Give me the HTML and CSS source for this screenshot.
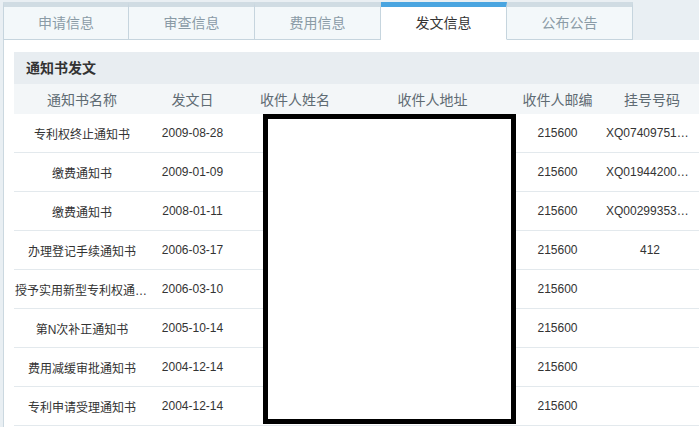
FILE: index.html
```html
<!DOCTYPE html>
<html lang="zh">
<head>
    <meta charset="UTF-8">
    <title>发文信息</title>
    <link rel="stylesheet" href="styles.css">
</head>
<body>
    <div class="page">
        <ul class="tabs">
            <li class="tab">申请信息</li>
            <li class="tab">审查信息</li>
            <li class="tab">费用信息</li>
            <li class="tab active">发文信息</li>
            <li class="tab">公布公告</li>
        </ul>

        <div class="content">
            <div class="panel">
                <div class="panel-title">通知书发文</div>
                <table class="grid">
                    <colgroup>
                        <col class="c-name">
                        <col class="c-date">
                        <col class="c-person">
                        <col class="c-addr">
                        <col class="c-zip">
                        <col class="c-no">
                    </colgroup>
                    <thead>
                        <tr>
                            <th>通知书名称</th>
                            <th>发文日</th>
                            <th>收件人姓名</th>
                            <th>收件人地址</th>
                            <th>收件人邮编</th>
                            <th>挂号号码</th>
                        </tr>
                    </thead>
                    <tbody>
                        <tr>
                            <td>专利权终止通知书</td>
                            <td class="num">2009-08-28</td>
                            <td></td>
                            <td></td>
                            <td class="num">215600</td>
                            <td class="num cut">XQ074097513CN</td>
                        </tr>
                        <tr>
                            <td>缴费通知书</td>
                            <td class="num">2009-01-09</td>
                            <td></td>
                            <td></td>
                            <td class="num">215600</td>
                            <td class="num cut">XQ019442006CN</td>
                        </tr>
                        <tr>
                            <td>缴费通知书</td>
                            <td class="num">2008-01-11</td>
                            <td></td>
                            <td></td>
                            <td class="num">215600</td>
                            <td class="num cut">XQ002993537CN</td>
                        </tr>
                        <tr>
                            <td>办理登记手续通知书</td>
                            <td class="num">2006-03-17</td>
                            <td></td>
                            <td></td>
                            <td class="num">215600</td>
                            <td class="num">412</td>
                        </tr>
                        <tr>
                            <td class="cut">授予实用新型专利权通知书</td>
                            <td class="num">2006-03-10</td>
                            <td></td>
                            <td></td>
                            <td class="num">215600</td>
                            <td></td>
                        </tr>
                        <tr>
                            <td>第N次补正通知书</td>
                            <td class="num">2005-10-14</td>
                            <td></td>
                            <td></td>
                            <td class="num">215600</td>
                            <td></td>
                        </tr>
                        <tr>
                            <td>费用减缓审批通知书</td>
                            <td class="num">2004-12-14</td>
                            <td></td>
                            <td></td>
                            <td class="num">215600</td>
                            <td></td>
                        </tr>
                        <tr>
                            <td>专利申请受理通知书</td>
                            <td class="num">2004-12-14</td>
                            <td></td>
                            <td></td>
                            <td class="num">215600</td>
                            <td></td>
                        </tr>
                    </tbody>
                </table>
            </div>
        </div>

        <!-- 收件人信息遮挡 -->
        <div class="mask"></div>
    </div>
</body>
</html>
```

FILE: styles.css
```css
html, body {
    margin: 0;
    padding: 0;
    background-color: #e9eff3;
}
body {
    width: 699px;
    height: 427px;
    overflow: hidden;
    font-family: "Liberation Sans", "Noto Sans CJK SC", sans-serif;
    color: #333;
}
.page {
    position: relative;
    padding-top: 2px;
}
.tabs {
    display: flex;
    margin: 0 0 0 3px;
    padding: 0;
    list-style: none;
    height: 38px;
}
.tab {
    box-sizing: border-box;
    width: 126px;
    height: 38px;
    border-top: 5px solid #d0dce3;
    border-right: 1px solid #c6d5de;
    border-bottom: 1px solid #c6d5de;
    background: #f3f8fa;
    color: #8a9ba6;
    font-size: 14px;
    line-height: 32px;
    text-align: center;
}
.tab:first-child {
    border-left: 1px solid #c6d5de;
}
.tab.active {
    border-top-color: #4aa5e0;
    border-bottom-color: #fff;
    background: #fff;
    color: #333;
}
.content {
    margin-left: 3px;
    border-left: 1px solid #cbd8e0;
    background: #fff;
    padding: 12px 0 0 10px;
    height: 375px;
    overflow: hidden;
}
.panel {
    width: 685px;
}
.panel-title {
    height: 32px;
    line-height: 32px;
    padding-left: 12px;
    background: #e8edf1;
    font-size: 14px;
    font-weight: bold;
    color: #333;
}
.grid {
    width: 685px;
    table-layout: fixed;
    border-collapse: collapse;
}
.c-name { width: 136px; }
.c-date { width: 85px; }
.c-person { width: 120px; }
.c-addr { width: 155px; }
.c-zip { width: 95px; }
.c-no { width: 94px; }
.grid th {
    height: 30px;
    padding: 0;
    background: #f3f6f8;
    font-size: 14px;
    font-weight: normal;
    color: #5f6b73;
    text-align: center;
}
.grid td {
    height: 38px;
    padding: 0;
    border-bottom: 1px solid #e3e9ed;
    font-size: 12px;
    color: #333;
    text-align: center;
    white-space: nowrap;
}
.grid td:last-child {
    padding-right: 4px;
}
.grid td.num {
    font-family: "Liberation Sans", Arial, sans-serif;
}
.grid td.cut {
    overflow: hidden;
    text-overflow: ellipsis;
    text-align: left;
    padding-left: 1px;
}
.mask {
    position: absolute;
    left: 263px;
    top: 114px;
    width: 253px;
    height: 310px;
    box-sizing: border-box;
    border: 5px solid #000;
    background: #fff;
}
```
